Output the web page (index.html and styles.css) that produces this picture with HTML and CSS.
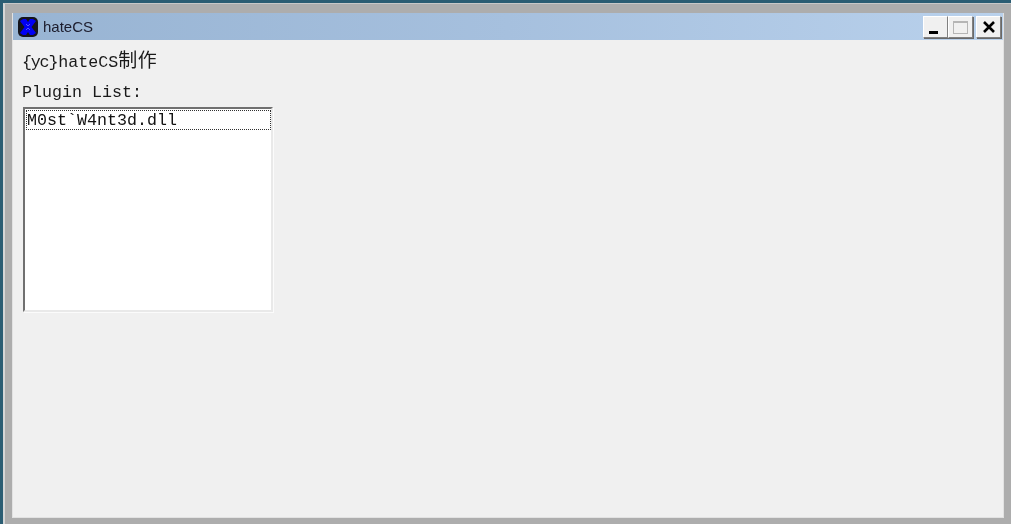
FILE: index.html
```html
<!DOCTYPE html>
<html lang="zh">
<head>
<meta charset="utf-8">
<title>hateCS</title>
<link rel="stylesheet" href="styles.css">
</head>
<body>
<div class="frame">
  <div class="window">
    <header class="titlebar">
      <svg class="app-icon" width="20" height="20" viewBox="0 0 20 20" aria-hidden="true">
        <rect x="0" y="0" width="20" height="20" rx="5" fill="#14141c"/>
        <path d="M2 4L5 2h3l2 3 2-3h3l3 2-4.500 6L18 16l-3 2h-3l-2-3-2 3H5l-3-2 4.500-6z" fill="#0000f4"/>
        <path d="M8 7l2 2 2-2M8 13l2-2 2 2" stroke="#7a7aff" stroke-width=".7" fill="none"/>
      </svg>
      <span class="title">hateCS</span>
      <div class="controls">
        <button class="ctl" type="button" aria-label="Minimize"><span class="min-glyph"></span></button>
        <button class="ctl ctl-disabled" type="button" aria-label="Maximize"><span class="max-glyph"></span></button>
        <button class="ctl ctl-close" type="button" aria-label="Close">
          <svg width="14" height="12" viewBox="0 0 14 12" aria-hidden="true"><path d="M2 1l10 10M12 1L2 11" stroke="#000" stroke-width="2.600" fill="none"/></svg>
        </button>
      </div>
    </header>
    <main class="content">
      <p class="heading"><span class="tight">{yc}</span>hateCS<span class="cjk">制作</span></p>
      <p class="label">Plugin List:</p>
      <div class="listbox">
        <div class="list-item">M0st`W4nt3d.dll</div>
      </div>
    </main>
  </div>
</div>
</body>
</html>
```
FILE: styles.css
```css
* { box-sizing: border-box; }
html, body { margin: 0; height: 100%; }
body {
  background: #2b5d73;
  overflow: hidden;
  padding: 3px 0 0 3px;
}
.frame {
  height: 100%;
  padding: 9px 7px 6px 7px;
  background: #adadad;
  border-top: 1px solid #c8c8c8;
  border-left: 2px solid #d6d6d6;
  filter: blur(0.3px);
}
.window {
  height: 100%;
  display: flex;
  flex-direction: column;
  background: #f0f0f0;
  border: 1px solid #e2e2e2;
  border-top: 0;
}
.titlebar {
  height: 27px;
  flex: none;
  display: flex;
  align-items: center;
  padding: 0 2px 0 5px;
  background: linear-gradient(90deg, #98b4d3 0%, #a6c0de 50%, #b9d1ec 100%);
}
.app-icon { flex: none; }
.title {
  margin-left: 5px;
  font: 15px "Liberation Sans", Arial, sans-serif;
  color: #1c1c2c;
}
.controls {
  margin-left: auto;
  display: flex;
  margin-top: 1px;
}
.ctl {
  width: 25px;
  height: 22px;
  padding: 0;
  display: flex;
  align-items: center;
  justify-content: center;
  background: #f0f0f0;
  border: 1px solid;
  border-color: #fff #808080 #808080 #fff;
  box-shadow: 1px 1px 0 #696969;
}
.ctl-close { margin-left: 3px; }
.min-glyph {
  width: 9px;
  height: 3px;
  background: #000;
  margin: 11px 4px 0 0;
}
.max-glyph {
  width: 15px;
  height: 13px;
  border: 1px solid #b5b5b5;
  border-top-width: 2px;
  background: #f0f0f0;
}
.content {
  flex: 1;
  padding: 10px 9px;
  color: #1a1a1a;
  font-family: "Liberation Mono", "Noto Sans CJK SC", monospace;
  font-size: 16.67px;
}
.heading {
  margin: 0;
  height: 22px;
  line-height: 18px;
  white-space: nowrap;
}
.tight { letter-spacing: -1.2px; margin-right: 1px; }
.cjk {
  font-family: "Noto Sans CJK SC", sans-serif;
  font-size: 19px;
  letter-spacing: 0.5px;
}
.label {
  margin: 11px 0 0;
  height: 20px;
  line-height: 20px;
}
.listbox {
  width: 250px;
  height: 205px;
  margin: 4px 0 0 1px;
  background: #fff;
  border: 2px solid;
  border-color: #707070 #e9e9e9 #e9e9e9 #707070;
  padding: 1px 0 0 1px;
  box-shadow: 1px 1px 0 #fbfbfb;
}
.list-item {
  width: 245px;
  height: 20px;
  line-height: 22px;
  padding-left: 1px;
  outline: 1px dotted #303030;
  outline-offset: -1px;
  white-space: pre;
  color: #111;
}
```
